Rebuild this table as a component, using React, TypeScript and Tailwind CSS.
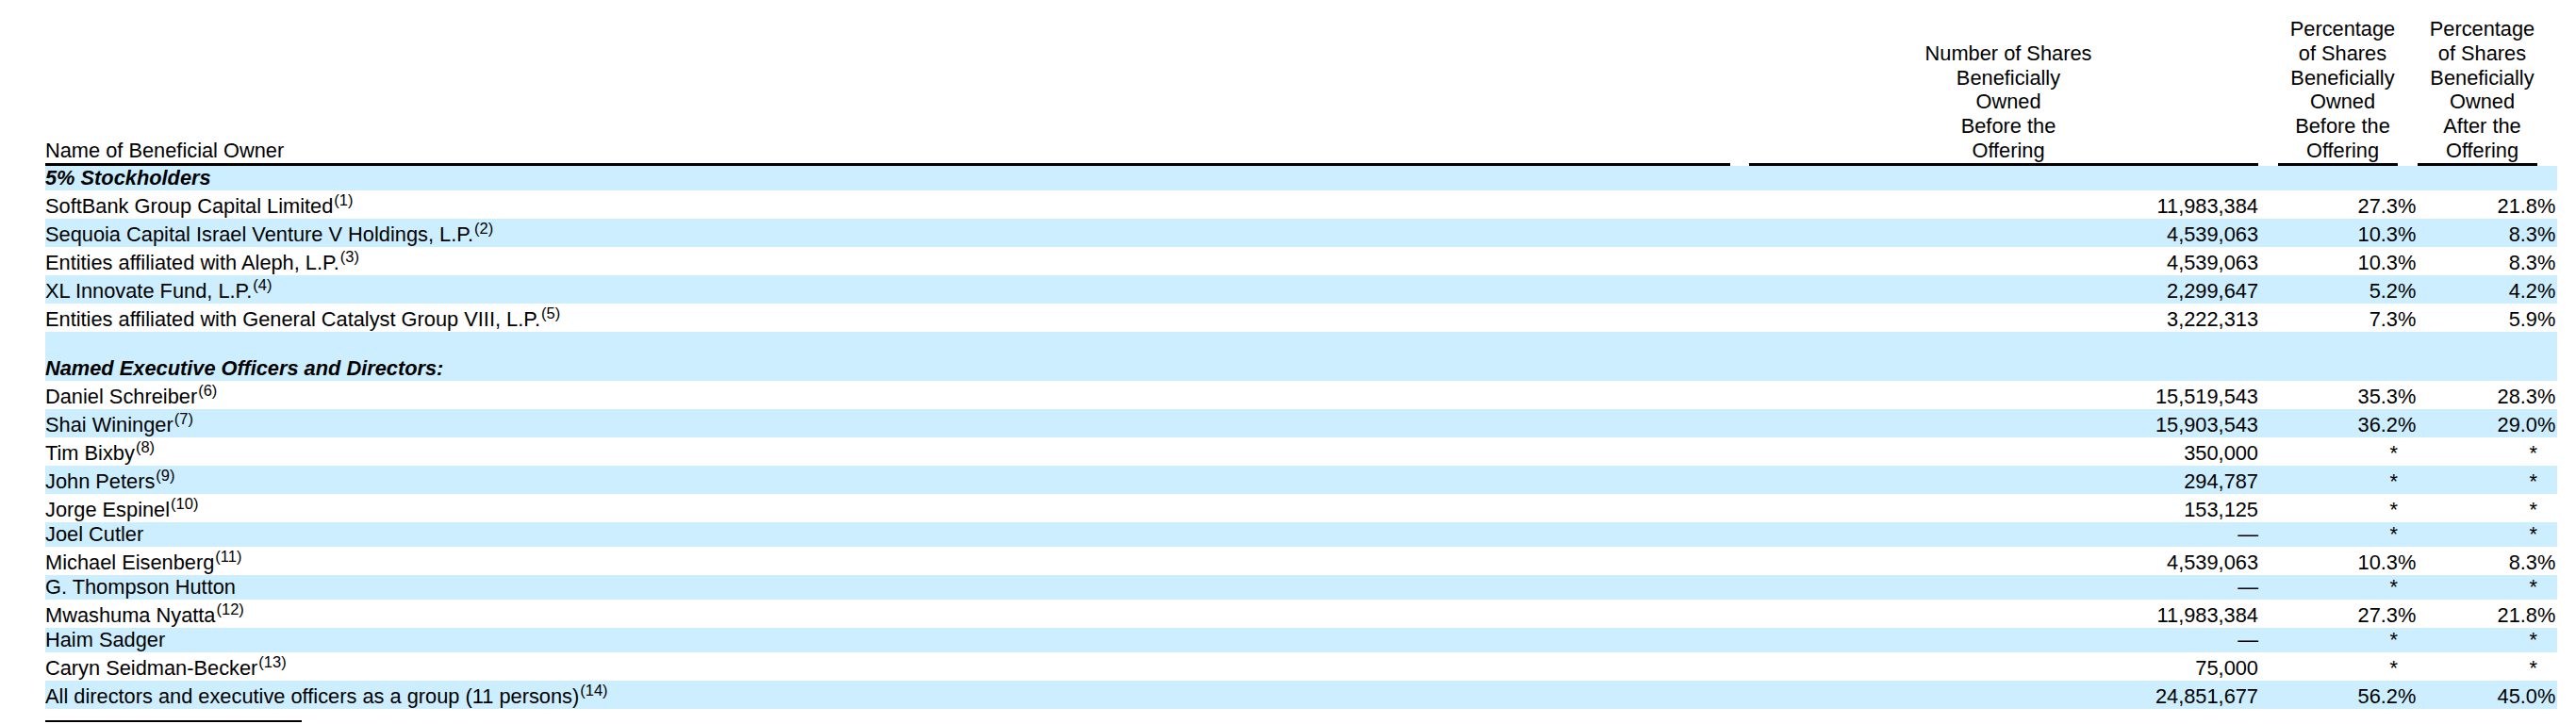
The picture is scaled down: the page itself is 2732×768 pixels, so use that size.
type Row = {
  name: string;
  note?: string;
  section?: boolean;
  shares?: string;
  pre?: string;
  post?: string;
  shade: boolean;
};

const rows: Row[] = [
  { name: '5% Stockholders', section: true, shade: true },
  { name: 'SoftBank Group Capital Limited', note: '1', shares: '11,983,384', pre: '27.3', post: '21.8', shade: false },
  { name: 'Sequoia Capital Israel Venture V Holdings, L.P.', note: '2', shares: '4,539,063', pre: '10.3', post: '8.3', shade: true },
  { name: 'Entities affiliated with Aleph, L.P.', note: '3', shares: '4,539,063', pre: '10.3', post: '8.3', shade: false },
  { name: 'XL Innovate Fund, L.P.', note: '4', shares: '2,299,647', pre: '5.2', post: '4.2', shade: true },
  { name: 'Entities affiliated with General Catalyst Group VIII, L.P.', note: '5', shares: '3,222,313', pre: '7.3', post: '5.9', shade: false },
  { name: '', shade: true },
  { name: 'Named Executive Officers and Directors:', section: true, shade: true },
  { name: 'Daniel Schreiber', note: '6', shares: '15,519,543', pre: '35.3', post: '28.3', shade: false },
  { name: 'Shai Wininger', note: '7', shares: '15,903,543', pre: '36.2', post: '29.0', shade: true },
  { name: 'Tim Bixby', note: '8', shares: '350,000', pre: '*', post: '*', shade: false },
  { name: 'John Peters', note: '9', shares: '294,787', pre: '*', post: '*', shade: true },
  { name: 'Jorge Espinel', note: '10', shares: '153,125', pre: '*', post: '*', shade: false },
  { name: 'Joel Cutler', shares: '—', pre: '*', post: '*', shade: true },
  { name: 'Michael Eisenberg', note: '11', shares: '4,539,063', pre: '10.3', post: '8.3', shade: false },
  { name: 'G. Thompson Hutton', shares: '—', pre: '*', post: '*', shade: true },
  { name: 'Mwashuma Nyatta', note: '12', shares: '11,983,384', pre: '27.3', post: '21.8', shade: false },
  { name: 'Haim Sadger', shares: '—', pre: '*', post: '*', shade: true },
  { name: 'Caryn Seidman-Becker', note: '13', shares: '75,000', pre: '*', post: '*', shade: false },
  { name: 'All directors and executive officers as a group (11 persons)', note: '14', shares: '24,851,677', pre: '56.2', post: '45.0', shade: true },
];

const cols = 'grid grid-cols-[1787px_20px_540px_21px_127px_21px_127px_21px]';

function Pct({ value }: { value?: string }) {
  const isPct = value && value !== '*';
  return (
    <>
      <div className="text-right">{value}</div>
      <div className="text-left">{isPct ? '%' : ''}</div>
    </>
  );
}

function Head({ lines }: { lines: string[] }) {
  return (
    <div className="border-b-[3px] border-black pl-[10px] text-center">
      {lines.map((l, i) => (
        <div key={i}>{l}</div>
      ))}
    </div>
  );
}

export default function App() {
  return (
    <div className="min-h-[768px] bg-white pl-[48px] pt-[18px] text-[21.8px] leading-[26px] text-black font-['Liberation_Sans',Arial,sans-serif]">
      <div className="w-[2664px]">
        <div className={`${cols} items-end leading-[25.8px]`}>
          <div className="border-b-[3px] border-black">Name of Beneficial Owner</div>
          <div />
          <Head lines={['Number of Shares', 'Beneficially', 'Owned', 'Before the', 'Offering']} />
          <div />
          <Head lines={['Percentage', 'of Shares', 'Beneficially', 'Owned', 'Before the', 'Offering']} />
          <div />
          <Head lines={['Percentage', 'of Shares', 'Beneficially', 'Owned', 'After the', 'Offering']} />
          <div />
        </div>

        {rows.map((r, i) => (
          <div
            key={i}
            className={`${cols} items-end ${r.note ? 'h-[30px]' : 'h-[26px]'} ${r.shade ? 'bg-[#cceeff]' : 'bg-white'}`}
          >
            <div className={`whitespace-nowrap ${r.section ? 'font-bold italic' : ''}`}>
              {r.name}
              {r.note && <sup className="ml-[1px] text-[16.5px] top-[-7.5px]">({r.note})</sup>}
            </div>
            <div />
            <div className="text-right">{r.shares}</div>
            <div />
            <Pct value={r.pre} />
            <Pct value={r.post} />
          </div>
        ))}

        <div className="mt-[12px] h-[2px] w-[272px] bg-black" />
      </div>
    </div>
  );
}
